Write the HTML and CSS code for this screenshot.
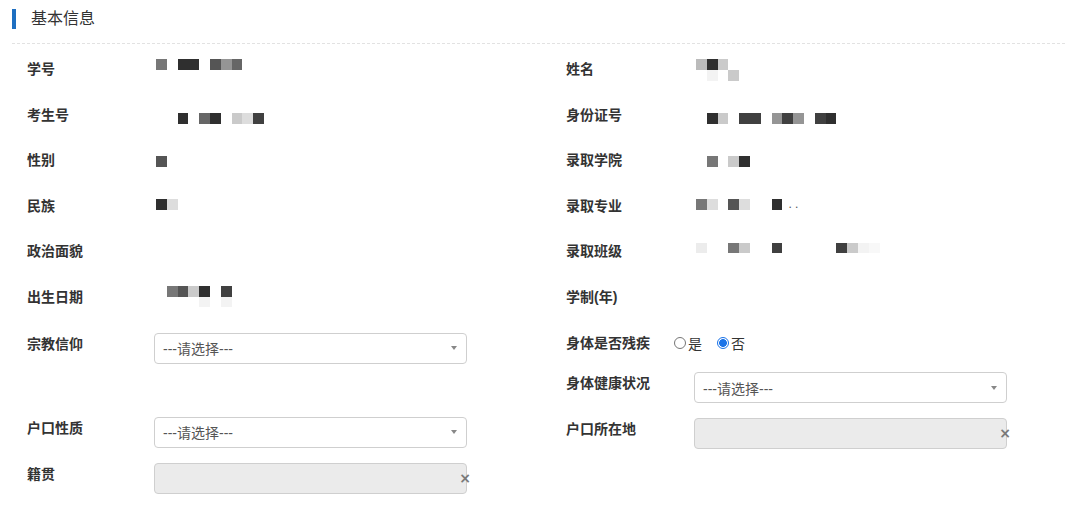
FILE: index.html
```html
<!DOCTYPE html>
<html lang="zh-CN">
<head>
<meta charset="utf-8">
<title>基本信息</title>
<link rel="stylesheet" href="styles.css">
</head>
<body>
<div class="panel-head"><span class="bar"></span><h2>基本信息</h2></div>
<div class="form">
  <div class="col">
    <div class="row"><div class="label">学号</div><div class="value"><div class="mosaic"><i class="k5"></i><i></i><i class="k1"></i><i class="k1"></i><i></i><i class="k3"></i><i class="k6"></i><i class="k4"></i></div></div></div>
    <div class="row"><div class="label">考生号</div><div class="value"><div class="mosaic r2"><i></i><i></i><i class="k1"></i><i></i><i class="k4"></i><i class="k1"></i><i></i><i class="k8"></i><i class="k9"></i><i class="k2"></i></div></div></div>
    <div class="row"><div class="label">性别</div><div class="value"><div class="mosaic r3"><i class="k3"></i></div></div></div>
    <div class="row"><div class="label">民族</div><div class="value"><div class="mosaic r4"><i class="k1"></i><i class="k9"></i></div></div></div>
    <div class="row"><div class="label">政治面貌</div><div class="value"></div></div>
    <div class="row"><div class="label">出生日期</div><div class="value"><div class="mosaic r6 w7"><i></i><i class="k5"></i><i class="k3"></i><i class="k8"></i><i class="k1"></i><i></i><i class="k2"></i><i></i><i></i><i></i><i></i><i class="k11"></i><i></i><i class="k11"></i></div></div></div>
    <div class="row sel"><div class="label">宗教信仰</div><div class="select"><span class="ph">---请选择---</span><span class="caret"></span></div></div>
    <div class="spacer"></div>
    <div class="row sel"><div class="label">户口性质</div><div class="select"><span class="ph">---请选择---</span><span class="caret"></span></div></div>
    <div class="row sel"><div class="label">籍贯</div><div class="select disabled"><span class="clear">×</span></div></div>
  </div>
  <div class="col">
    <div class="row"><div class="label">姓名</div><div class="value"><div class="mosaic w4"><i class="k7"></i><i class="k1"></i><i class="k8"></i><i></i><i></i><i class="k11"></i><i></i><i class="k8"></i></div></div></div>
    <div class="row"><div class="label">身份证号</div><div class="value"><div class="mosaic r2"><i></i><i class="k1"></i><i class="k8"></i><i></i><i class="k2"></i><i class="k2"></i><i></i><i class="k6"></i><i class="k2"></i><i class="k6"></i><i></i><i class="k2"></i><i class="k1"></i></div></div></div>
    <div class="row"><div class="label">录取学院</div><div class="value"><div class="mosaic r3"><i></i><i class="k5"></i><i></i><i class="k8"></i><i class="k1"></i></div></div></div>
    <div class="row"><div class="label">录取专业</div><div class="value flex"><div class="mosaic r4"><i class="k5"></i><i class="k9"></i><i></i><i class="k3"></i><i class="k9"></i><i></i><i></i><i class="k1"></i></div><span class="dots">. .</span></div></div>
    <div class="row"><div class="label">录取班级</div><div class="value"><div class="mosaic r5"><i class="k10"></i><i></i><i></i><i class="k5"></i><i class="k8"></i><i></i><i></i><i class="k2"></i><i></i><i></i><i></i><i></i><i></i><i class="k2"></i><i class="k8"></i><i class="k11"></i><i class="k12"></i></div></div></div>
    <div class="row"><div class="label">学制(年)</div><div class="value"></div></div>
    <div class="row radio-row"><div class="label">身体是否残疾</div>
      <div class="radios">
        <span class="opt"><span class="radio"></span>是</span>
        <span class="opt"><span class="radio on"></span>否</span>
      </div>
    </div>
    <div class="row sel"><div class="label">身体健康状况</div><div class="select"><span class="ph">---请选择---</span><span class="caret"></span></div></div>
    <div class="row sel"><div class="label">户口所在地</div><div class="select disabled"><span class="clear">×</span></div></div>
  </div>
</div>
</body>
</html>
```
FILE: styles.css
```css
* { box-sizing: border-box; }
body {
  margin: 0;
  background: #fff;
  color: #333;
  font-family: "Liberation Sans", "Noto Sans CJK SC", sans-serif;
}
.panel-head {
  display: flex;
  align-items: center;
  gap: 15px;
  margin: 0 15px 0 12px;
  padding: 8px 0 13px;
  border-bottom: 1px dashed #e2e2e2;
}
.bar {
  width: 4px;
  height: 20px;
  background: #1e6fc1;
}
.panel-head h2 {
  margin: 0;
  font-size: 16px;
  font-weight: 400;
  line-height: 22px;
  color: #333;
}
.form {
  display: grid;
  grid-template-columns: 1fr 1fr;
  padding-top: 15px;
}
.col {
  display: flex;
  flex-direction: column;
  gap: 14.6px;
  padding-left: 27px;
}
.col + .col { padding-left: 26px; }
.row {
  display: flex;
  min-height: 31px;
}
.label {
  width: 127px;
  flex-shrink: 0;
  font-size: 14px;
  font-weight: 700;
  line-height: 20px;
  color: #333;
}
.col + .col .label { width: 128px; }
.row.sel .label { padding-top: 1px; }
.value { padding-left: 2px; }
.value.flex { display: flex; align-items: flex-start; }
.spacer { height: 24.2px; }

.mosaic {
  display: grid;
  grid-template-columns: repeat(20, 10.8px);
  grid-auto-rows: 10.8px;
}
.mosaic.w4 { grid-template-columns: repeat(4, 10.8px); }
.mosaic.w7 { grid-template-columns: repeat(7, 10.8px); }
.mosaic.r2 { margin-top: 8.4px; }
.mosaic.r3 { margin-top: 6px; }
.mosaic.r4 { margin-top: 3.6px; }
.mosaic.r5 { margin-top: 1.2px; }
.mosaic.r6 { margin-top: -1.2px; }
.mosaic i { display: block; }
.k1 { background: #2f2f2f; }
.k2 { background: #404040; }
.k3 { background: #555; }
.k4 { background: #666; }
.k5 { background: #777; }
.k6 { background: #959595; }
.k7 { background: #bbb; }
.k8 { background: #cacaca; }
.k9 { background: #dddddd; }
.k10 { background: #ececec; }
.k11 { background: #f3f3f3; }
.k12 { background: #f8f8f8; }
.dots {
  margin-left: 6px;
  margin-top: 1px;
  font-size: 12px;
  line-height: 14px;
  color: #555;
  white-space: nowrap;
}
.value.flex .mosaic { width: 86.4px; grid-template-columns: repeat(8, 10.8px); }

.select {
  position: relative;
  width: 313px;
  height: 31px;
  border: 1px solid #cfcfcf;
  border-radius: 4px;
  background: #fff;
  display: flex;
  align-items: center;
  justify-content: space-between;
  padding: 0 9px 0 8px;
  font-size: 14px;
  color: #555;
}
.select.disabled { background: #ebebeb; }
.caret {
  width: 0;
  height: 0;
  border-left: 3px solid transparent;
  border-right: 3px solid transparent;
  border-top: 4px solid #888;
}
.clear {
  position: absolute;
  right: -5px;
  top: 50%;
  transform: translateY(-50%);
  font-family: "DejaVu Sans", sans-serif;
  font-size: 14px;
  font-weight: 700;
  color: #7a7a7a;
  line-height: 1;
}

.row.radio-row { min-height: 25px; }
.row.radio-row .label { width: auto; margin-right: 24px; }
.radios {
  display: flex;
  align-items: center;
  height: 20px;
  font-size: 14px;
  color: #333;
}
.opt { display: flex; align-items: center; }
.opt + .opt { margin-left: 15px; }
.radio {
  width: 12px;
  height: 12px;
  border-radius: 50%;
  border: 1px solid #767676;
  background: #fff;
  margin-right: 2px;
}
.radio.on {
  border-color: #1a73e8;
  background: radial-gradient(circle, #1a73e8 0 3.6px, #fff 4.2px);
}
```
